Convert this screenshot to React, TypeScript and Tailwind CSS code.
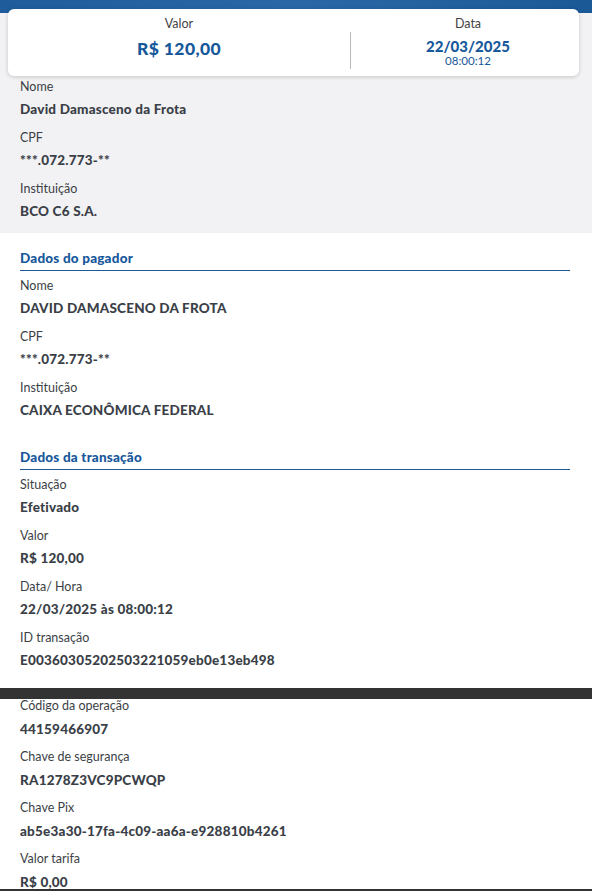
import React from "react";

const font = { fontFamily: "Lato, 'Open Sans', sans-serif" };

function Field({ label, value, gap = "mt-[4px]", mb = "mb-[11px]" }: { label: string; value: string; gap?: string; mb?: string }) {
  return (
    <div className={mb}>
      <div className="h-[18px] leading-[18px] text-[12.5px] text-[#3c3f46]">{label}</div>
      <div className={`${gap} h-[18px] leading-[18px] text-[13.5px] font-black tracking-[0.2px] text-[#3b3f48]`}>{value}</div>
    </div>
  );
}

function Header({ title }: { title: string }) {
  return (
    <div className="ml-[20px] mr-[22px] border-b border-[#1d5a93] pb-[3px] mb-[6px]">
      <div className="h-[18px] leading-[18px] text-[13.5px] font-black tracking-[0.2px] text-[#17589b]">{title}</div>
    </div>
  );
}

export default function App() {
  return (
    <div className="w-[592px] h-[893px] overflow-hidden bg-white" style={font}>
      <div className="bg-[#f2f2f4]">
        <div className="h-[13px] bg-gradient-to-r from-[#1f5c9b] via-[#2a67a6] to-[#1b5896]" />
        <div className="relative -mt-[4px] mx-[8px] w-[571px] h-[67px] bg-white rounded-[6px] shadow-[0_1px_4px_rgba(0,0,0,0.18)] flex">
          <div className="w-[342px] flex flex-col items-center pt-[6px]">
            <div className="h-[18px] leading-[18px] text-[12.5px] text-[#444]">Valor</div>
            <div className="mt-[5px] h-[22px] leading-[22px] text-[17.5px] font-black tracking-[0.4px] text-[#17589b]">R$ 120,00</div>
          </div>
          <div className="mt-[23px] h-[37px] w-px bg-[#b8b8b8]" />
          <div className="flex-1 flex flex-col items-center pt-[6px] pl-[6px]">
            <div className="h-[18px] leading-[18px] text-[12.5px] text-[#444]">Data</div>
            <div className="mt-[3px] h-[20px] leading-[20px] text-[15px] font-black text-[#17589b]">22/03/2025</div>
            <div className="-mt-[2px] h-[14px] leading-[14px] text-[11.5px] text-[#17589b]">08:00:12</div>
          </div>
        </div>
        <div className="px-[20px] pt-[2px] pb-[2px]">
          <Field label="Nome" value="David Damasceno da Frota" />
          <Field label="CPF" value="***.072.773-**" />
          <Field label="Instituição" value="BCO C6 S.A." />
        </div>
      </div>
      <div className="pt-[16px]">
        <Header title="Dados do pagador" />
        <div className="px-[20px]">
          <Field label="Nome" value="DAVID DAMASCENO DA FROTA" />
          <Field label="CPF" value="***.072.773-**" />
          <Field label="Instituição" value="CAIXA ECONÔMICA FEDERAL" mb="mb-[29px]" />
        </div>
        <Header title="Dados da transação" />
        <div className="px-[20px]">
          <Field label="Situação" value="Efetivado" />
          <Field label="Valor" value="R$ 120,00" />
          <Field label="Data/ Hora" value="22/03/2025 às 08:00:12" />
          <Field label="ID transação" value="E00360305202503221059eb0e13eb498" mb="mb-[19px]" />
        </div>
      </div>
      <div className="h-[11px] bg-[#333333]" />
      <div className="px-[20px] h-[192px] border-b-2 border-[#333333]">
        <div className="mb-[10px]">
          <div className="h-[14px] leading-[14px] text-[12.5px] text-[#3c3f46]">Código da operação</div>
          <div className="mt-[7px] h-[18px] leading-[18px] text-[13.5px] font-black tracking-[0.2px] text-[#3b3f48]">44159466907</div>
        </div>
        <Field label="Chave de segurança" value="RA1278Z3VC9PCWQP" gap="mt-[5px]" mb="mb-[10px]" />
        <Field label="Chave Pix" value="ab5e3a30-17fa-4c09-aa6a-e928810b4261" gap="mt-[5px]" mb="mb-[10px]" />
        <Field label="Valor tarifa" value="R$ 0,00" gap="mt-[5px]" mb="mb-0" />
      </div>
    </div>
  );
}
